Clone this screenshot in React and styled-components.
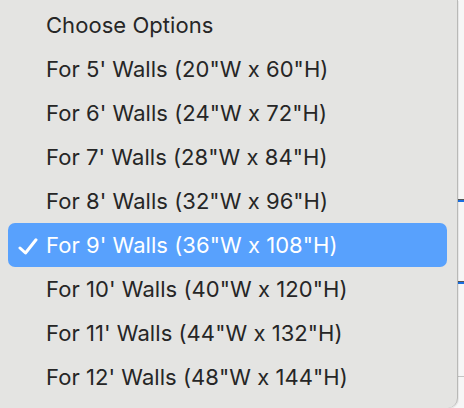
import React from "react";
import styled, { createGlobalStyle } from "styled-components";

const Global = createGlobalStyle`
  html, body {
    margin: 0;
    padding: 0;
    background: #f4f4f4;
    overflow: hidden;
  }
`;

const Page = styled.div`
  position: relative;
  width: 464px;
  height: 408px;
  background: #f6f6f6;
`;

// bits of the page peeking out behind the popup
const Backdrop = styled.div`
  display: flex;
  flex-direction: column;
  align-items: flex-end;
  height: 100%;
`;

const Rule = styled.div`
  width: 6px;
  height: ${(p) => p.h}px;
  margin-top: ${(p) => p.top}px;
  background: ${(p) => p.color};
`;

const Menu = styled.ul`
  position: absolute;
  top: 0;
  left: 0;
  width: 458px;
  height: 408px;
  margin: 0;
  padding: 3px 0 0;
  box-sizing: border-box;
  list-style: none;
  background: #e4e4e2;
  border-right: 1px solid #b9b9b7;
  border-bottom-right-radius: 10px;
  box-shadow: 1px 1px 0 rgba(0, 0, 0, 0.06);
  font-family: Inter, "Liberation Sans", sans-serif;
  font-size: 22px;
`;

const Option = styled.li`
  position: relative;
  display: flex;
  align-items: center;
  height: 44px;
  margin: 0 10px 0 8px;
  padding-left: 38px;
  border-radius: 7px;
  color: ${(p) => (p.$selected ? "#ffffff" : "#262626")};
  background: ${(p) => (p.$selected ? "#58a1fd" : "transparent")};
  letter-spacing: 0.05px;
`;

const Check = styled.svg`
  position: absolute;
  left: 10px;
  top: 50%;
  width: 20px;
  height: 17px;
  margin-top: -7px;
`;

const options = [
  "Choose Options",
  `For 5' Walls (20"W x 60"H)`,
  `For 6' Walls (24"W x 72"H)`,
  `For 7' Walls (28"W x 84"H)`,
  `For 8' Walls (32"W x 96"H)`,
  `For 9' Walls (36"W x 108"H)`,
  `For 10' Walls (40"W x 120"H)`,
  `For 11' Walls (44"W x 132"H)`,
  `For 12' Walls (48"W x 144"H)`,
];

export default function App() {
  const selected = 5;
  return (
    <Page>
      <Global />
      <Backdrop>
        <Rule top={199} h={1} color="#555" />
        <Rule top={0} h={2} color="#1a6fe0" />
        <Rule top={79} h={1} color="#555" />
        <Rule top={0} h={2} color="#1a6fe0" />
        <Rule top={92} h={1} color="#c4c4c4" />
      </Backdrop>
      <Menu>
        {options.map((label, i) => (
          <Option key={label} $selected={i === selected}>
            {i === selected && (
              <Check viewBox="0 0 20 17">
                <path
                  d="M2 10 L7.5 15 L18 1.8"
                  fill="none"
                  stroke="#fff"
                  strokeWidth="3"
                  strokeLinecap="round"
                  strokeLinejoin="round"
                />
              </Check>
            )}
            {label}
          </Option>
        ))}
      </Menu>
    </Page>
  );
}
